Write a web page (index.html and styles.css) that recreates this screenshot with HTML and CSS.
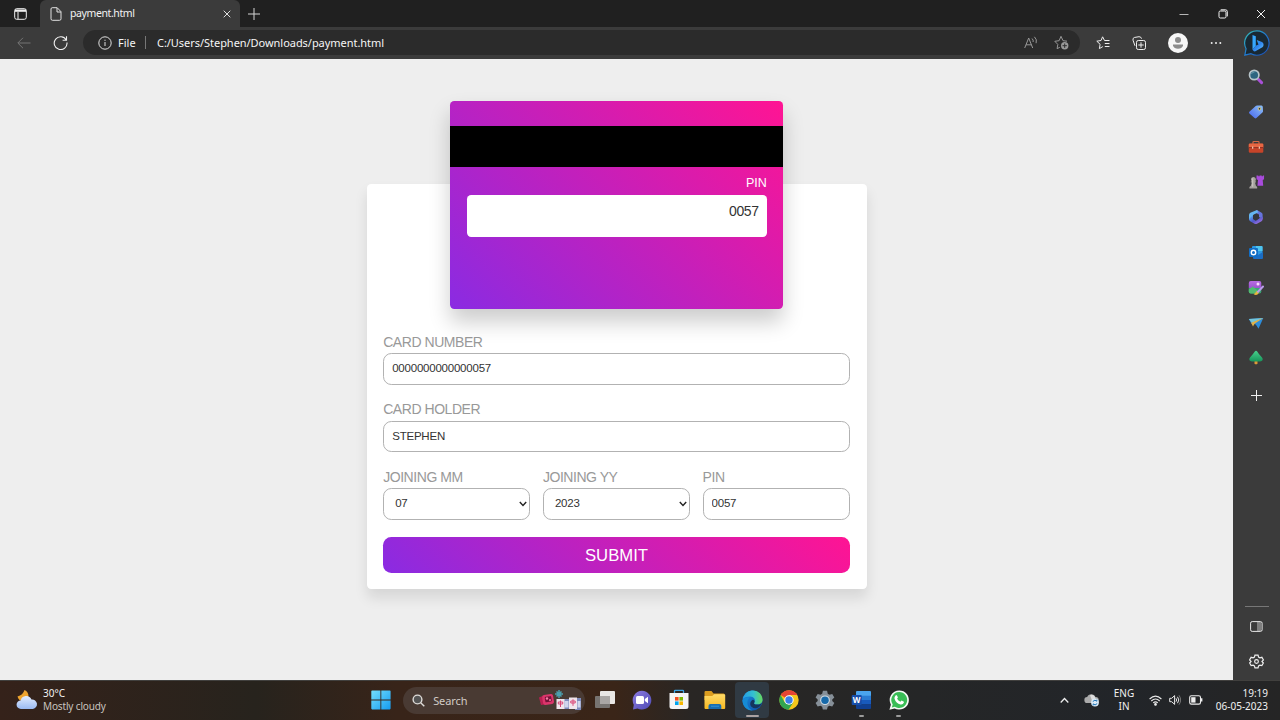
FILE: index.html
```html
<!DOCTYPE html>
<html lang="en">
<head>
<meta charset="utf-8">
<title>payment.html</title>
<link rel="stylesheet" href="styles.css">
</head>
<body>
<svg width="0" height="0" class="defs">
  <defs>
    <linearGradient id="bing" x1="0" y1="0" x2="1" y2="1"><stop offset="0" stop-color="#35b8f4"/><stop offset=".5" stop-color="#2e83ee"/><stop offset="1" stop-color="#66c9ff"/></linearGradient>
    <linearGradient id="ring" x1="0" y1="0" x2="1" y2="1"><stop offset="0" stop-color="#36c0b5"/><stop offset=".5" stop-color="#2079cf"/><stop offset="1" stop-color="#1a4bb5"/></linearGradient>
    <linearGradient id="tag" x1="0" y1="1" x2="1" y2="0"><stop offset="0" stop-color="#4765ee"/><stop offset="1" stop-color="#8ec2f5"/></linearGradient>
    <linearGradient id="office" x1="0" y1="0" x2="1" y2="1"><stop offset="0" stop-color="#5bbcf7"/><stop offset=".5" stop-color="#5157cc"/><stop offset="1" stop-color="#bd7ae7"/></linearGradient>
    <linearGradient id="photo" x1="0" y1="0" x2="0" y2="1"><stop offset="0" stop-color="#b86be4"/><stop offset=".55" stop-color="#9b55cf"/><stop offset=".6" stop-color="#39a777"/></linearGradient>
    <linearGradient id="tree" x1="0" y1="0" x2="0" y2="1"><stop offset="0" stop-color="#48cf8c"/><stop offset="1" stop-color="#16945a"/></linearGradient>
    <linearGradient id="win" x1="0" y1="0" x2="1" y2="1"><stop offset="0" stop-color="#74dffc"/><stop offset="1" stop-color="#159bf0"/></linearGradient>
    <linearGradient id="chat" x1="0" y1="0" x2="1" y2="1"><stop offset="0" stop-color="#8d7be0"/><stop offset="1" stop-color="#4e4bb5"/></linearGradient>
    <linearGradient id="edgetop" x1="0" y1="0" x2="1" y2="0"><stop offset="0" stop-color="#259de6"/><stop offset=".55" stop-color="#35c1ce"/><stop offset="1" stop-color="#67d95c"/></linearGradient>
    <linearGradient id="edgelow" x1="0" y1="0" x2="1" y2="1"><stop offset="0" stop-color="#1d91e2"/><stop offset="1" stop-color="#0c4ca5"/></linearGradient>
    <linearGradient id="folder" x1="0" y1="0" x2="0" y2="1"><stop offset="0" stop-color="#ffdb68"/><stop offset="1" stop-color="#f6b821"/></linearGradient>
    <linearGradient id="cloud" x1="0" y1="0" x2="0" y2="1"><stop offset="0" stop-color="#e2edff"/><stop offset="1" stop-color="#9bbaf2"/></linearGradient>
  </defs>
</svg>
<div class="desktop">
  <header class="titlebar">
    <div class="tab-actions"><svg width="13" height="12" viewBox="0 0 13 12"><rect x=".7" y=".7" width="11.6" height="10.6" rx="2" fill="none" stroke="#f0f0f0"/><path d="M1 1.5h11v2.3H1z" fill="#f0f0f0"/><path d="M4 4v7" stroke="#f0f0f0"/></svg></div>
    <div class="tab">
      <svg width="12" height="14" viewBox="0 0 12 14" fill="none" stroke="#e2e2e2"><path d="M2.2.7h5l3.8 4v7.1a1.5 1.5 0 0 1-1.5 1.5h-7A1.5 1.5 0 0 1 1 11.8V2A1.3 1.3 0 0 1 2.2.7z"/><path d="M7 1v4h4"/></svg>
      <span class="tab-title">payment.html</span>
      <svg width="8" height="8" viewBox="0 0 8 8" stroke="#e0e0e0"><path d="M.7.7l6.6 6.6M7.3.7L.7 7.3"/></svg>
    </div>
    <div class="new-tab"><svg width="12" height="12" viewBox="0 0 12 12" stroke="#d5d5d5"><path d="M6 0v12M0 6h12"/></svg></div>
    <div class="window-buttons">
      <svg width="10" height="10" viewBox="0 0 10 10" stroke="#ddd"><path d="M.5 5.5h9" stroke-width=".8"/></svg>
      <svg width="10" height="10" viewBox="0 0 10 10" fill="none" stroke="#f3f3f3"><rect x="1" y="2" width="7" height="7" rx="1.3"/><path d="M2.7.8h4.8a1.8 1.8 0 0 1 1.8 1.8v4.8"/></svg>
      <svg width="10" height="10" viewBox="0 0 10 10" stroke="#f3f3f3"><path d="M1 1l8 8M9 1L1 9"/></svg>
    </div>
  </header>

  <div class="browser">
    <div class="view">
      <nav class="toolbar">
        <div class="tool back"><svg width="14" height="12" viewBox="0 0 14 12" fill="none" stroke="#757575"><path d="M13.5 6H1M6 .8L.8 6 6 11.2"/></svg></div>
        <div class="tool reload"><svg width="15" height="15" viewBox="0 0 15 15" fill="none" stroke="#f0f0f0" stroke-width="1.1"><path d="M13.3 5.2A6.4 6.4 0 1 0 14 7.5M13.5 1.2v4H9.6"/></svg></div>
        <div class="address">
          <svg width="14" height="14" viewBox="0 0 14 14" fill="none" stroke="#e0e0e0"><circle cx="7" cy="7" r="6.2"/><path d="M7 6v4M7 3.7v1.2"/></svg>
          <span class="scheme">File</span><span class="divider"></span><span class="url">C:/Users/Stephen/Downloads/payment.html</span>
          <svg class="read" width="14" height="13" viewBox="0 0 14 13" fill="none" stroke="#989898"><path d="M.7 12L4.7 2l4 10M2 8.8h5.5M8 2.5q1.7 1.5 1.1 3.5M10.4.8q3 2.8 1.7 6.4"/></svg>
          <svg width="15" height="15" viewBox="0 0 15 15" fill="none" stroke="#969696"><path d="M5.8 12.3l-2.7 1.4.7-4.3L.8 6.3l4.3-.6L7 1.3l2 4.4 4 .5"/><circle cx="10.7" cy="10.7" r="3.7" fill="#999" stroke="none"/><path d="M10.7 8.5v4.4M8.5 10.7h4.4" stroke="#303030"/></svg>
        </div>
        <div class="tools-right">
          <svg width="14" height="14" viewBox="0 0 14 14" fill="none" stroke="#eee"><path d="M6.8 10.6l-3.4 2 .7-4.3L.8 5.2l4.2-.7L6.6.8l1.9 3.7h5M8.8 7.5h4.7M8.8 10.5h4.7"/></svg>
          <svg width="14" height="14" viewBox="0 0 14 14" fill="none" stroke="#eee"><rect x="4.5" y="4.5" width="9" height="9" rx="1.8"/><path d="M9 6.3v5.4M6.3 9h5.4M3 9.8L1 4.2Q.5 2.2 2.3 1.5L7 .7q2-.2 2.5 2"/></svg>
          <svg width="20" height="20" viewBox="0 0 20 20"><circle cx="10" cy="10" r="10" fill="#f7f7f7"/><circle cx="10" cy="7" r="3" fill="#8c8c8c"/><path d="M5 11.5h10v1.2q-1.2 3-5 3t-5-3z" fill="#8c8c8c"/></svg>
          <svg width="12" height="4" viewBox="0 0 12 4" fill="#eee"><circle cx="1.7" cy="2" r="1"/><circle cx="6" cy="2" r="1"/><circle cx="10.3" cy="2" r="1"/></svg>
        </div>
      </nav>
      <main class="page">
        <section class="card">
          <div class="stripe"></div>
          <div class="card-pin">PIN</div>
          <div class="pin-box">0057</div>
        </section>
        <form class="payment">
          <div class="field"><label for="number">CARD NUMBER</label><input id="number" value="0000000000000057"></div>
          <div class="field"><label for="holder">CARD HOLDER</label><input id="holder" value="STEPHEN"></div>
          <div class="field-row">
            <div class="field"><label>JOINING MM</label><div class="select">07<svg width="8" height="6" viewBox="0 0 8 6" fill="none" stroke="#222" stroke-width="1.4"><path d="M.8 1L4 4.5 7.2 1"/></svg></div></div>
            <div class="field"><label>JOINING YY</label><div class="select">2023<svg width="8" height="6" viewBox="0 0 8 6" fill="none" stroke="#222" stroke-width="1.4"><path d="M.8 1L4 4.5 7.2 1"/></svg></div></div>
            <div class="field"><label for="pin">PIN</label><input id="pin" value="0057"></div>
          </div>
          <button type="button" class="submit">SUBMIT</button>
        </form>
      </main>
    </div>

    <aside class="sidebar">
      <div class="side bing"><svg width="26" height="26" viewBox="0 0 26 26"><path d="M13 .8A12.2 12.2 0 1 1 7 23.7L.8 25.2l1.3-6.5A12.2 12.2 0 0 1 13 .8z" fill="#192934" stroke="url(#ring)" stroke-width="1.2"/><path d="M8.5 5l3.300 1.300v9.500l-3.300 4z" fill="#36a8ff"/><path d="M8.500 19.800l3.300-4 2.700-1.400-1.800-4.400 5.300 2q1.500.7 1.500 2.300v1q0 1.200-1.100 1.900l-6.600 3.900q-1.700 1-3.300-1.300z" fill="url(#bing)"/></svg></div>
      <div class="side"><svg width="16" height="16" viewBox="0 0 16 16"><path d="M10 10l3.600 3.600" stroke="#a950d8" stroke-width="3" stroke-linecap="round"/><circle cx="6.2" cy="6" r="4.7" fill="#2d6580" stroke="#b6c3c9" stroke-width="1.7"/><path d="M3.5 5Q4 3 6.5 3" stroke="#679cad" fill="none"/></svg></div>
      <div class="side"><svg width="16" height="16" viewBox="0 0 16 16"><path d="M9 1.500l4.500.1q1.200.1 1.300 1.300l.2 4.300q0 .7-.6 1.200l-6 5.600q-.9.800-1.800 0L1.400 9.600q-.9-.9 0-1.800l6.300-5.800q.5-.5 1.300-.5z" fill="url(#tag)"/><circle cx="11.500" cy="4.800" r="1.300" fill="#334" stroke="#dcd27e"/></svg></div>
      <div class="side"><svg width="16" height="16" viewBox="0 0 16 16"><path d="M5 5V3.200q0-.7.7-.7h4.600q.7 0 .7.7V5" fill="none" stroke="#d76745" stroke-width="1.2"/><rect x=".8" y="4.700" width="14.500" height="9" rx="1.200" fill="#c74429"/><path d="M.8 5.500q0-1 1-1h12.500q1 0 1 1v3H.8z" fill="#e86743"/><path d="M1 8.600h14" stroke="#913022"/><path d="M4 7.500h1.300v2.300H4zM10.700 7.500H12v2.300h-1.300z" fill="#edc1a8"/></svg></div>
      <div class="side"><svg width="17" height="16" viewBox="0 0 18 16"><path d="M9 1h2v1h1.200V1h2.300v1h1.200V1H17v4l-1.400 1 .5 6H10l.6-6L9 5z" fill="#a84bdc"/><path d="M5.800 2.800a2.500 2.500 0 0 1 1.600 4.500h1v1.200h-1l1 3.500 1.300 1.300V15H1.500v-1.700L3 12l1-3.500H3V7.300h1.100a2.500 2.500 0 0 1 1.700-4.500z" fill="#a5a19d"/><path d="M5 4v9" stroke="#d0ccc8"/></svg></div>
      <div class="side"><svg width="16" height="16" viewBox="0 0 16 16"><path d="M9 1l4.600 2.700q1 .6 1 1.800v4.700L11 8V5.500L7.500 3.700z" fill="#6674dc"/><path d="M9 1L2.300 3.800Q1 4.500 1 6v4.500L5 11V6l5.300-2.700z" fill="#65b5f0"/><path d="M1 10q0 1.500 1.200 2.200l4.300 2.500q1.300.7 2.500 0l4.500-2.500q1.200-.8 1.200-2.200V7.500L11 9.500l-3.300 2.200L5 10V6z" fill="url(#office)"/><path d="M5.300 6.200L8 4.800l3 1.500v3.200l-3 2-2.700-1.500z" fill="#35363b"/></svg></div>
      <div class="side"><svg width="16" height="16" viewBox="0 0 16 16"><rect x="4" y="1" width="10.500" height="11" rx="1" fill="#2c99e3"/><path d="M8 1h5.500q1 0 1 1v4H8z" fill="#4fc5ef"/><path d="M5 7l5 3 5-3v6q0 1-1 1H6q-1 0-1-1z" fill="#1b6dc4"/><rect x="1" y="3" width="9" height="9" rx="1" fill="#126ec6"/><circle cx="5.500" cy="7.500" r="2.200" fill="none" stroke="#fff" stroke-width="1.400"/></svg></div>
      <div class="side"><svg width="16" height="16" viewBox="0 0 16 16"><rect x=".8" y="1" width="12.500" height="12.500" rx="2" fill="url(#photo)"/><path d="M.8 9.500l4-3 5 4.200-3 2.800h-4q-2 0-2-2z" fill="#52bb72"/><circle cx="10" cy="4" r="1.500" fill="#f8dafa"/><path d="M5.500 14q2-.5 2.500-2.200 1.200-1.500 2.500 0 .8 1.500-1 2.700-2 1-4-.5z" fill="#e9ba3b"/><path d="M10 11.800l5-5.300" stroke="#b99bea" stroke-width="2" stroke-linecap="round"/></svg></div>
      <div class="side"><svg width="16" height="16" viewBox="0 0 16 16"><path d="M.8 4L15.300 3 10.500 13.800 7.800 9.600 3.300 8.500z" fill="#2d8ddb"/><path d="M.8 4L15.300 3 4 8z" fill="#73c5db"/><path d="M3 7.800L15.300 3 6.500 8.800 5 11.500z" fill="#e2b248"/></svg></div>
      <div class="side"><svg width="16" height="16" viewBox="0 0 16 16"><path d="M6.500 10h3v3.700q-1.500 1.300-3 0z" fill="#dd9a37"/><path d="M8 .8q.7 0 1.200.8 1.700 3 4.800 5.800 1.400 1.500.3 3-1.100 1.200-6.300 1.200t-6.300-1.200q-1-1.500.3-3Q5.100 4.400 6.800 1.600 7.300.8 8 .8z" fill="url(#tree)"/></svg></div>
      <div class="side add"><svg width="11" height="11" viewBox="0 0 11 11" stroke="#f0f0f0"><path d="M5.500 0v11M0 5.500h11"/></svg></div>
      <div class="side-rule"></div>
      <div class="side"><svg width="13" height="11" viewBox="0 0 13 11" fill="none" stroke="#e7e7e7"><rect x=".6" y=".6" width="11.500" height="9.800" rx="1.600"/><path d="M8 1v9M10 1v9" stroke-width=".8"/></svg></div>
      <div class="side"><svg width="15" height="15" viewBox="0 0 24 24" fill="none" stroke="#ededed" stroke-width="1.900"><circle cx="12" cy="12" r="3"/><path d="M9.500 1.800h5l.8 3.200 2.100 1.200 3.200-.9 2.400 4.200-2.300 2.400 2.300 2.500-2.400 4.200-3.200-.8-2.100 1.200-.8 3.200h-5L8.700 19l-2.100-1.200-3.200.8L1 14.400l2.300-2.500L1 9.500l2.400-4.200 3.200.9L8.700 5z"/></svg></div>
    </aside>
  </div>

  <footer class="taskbar">
    <div class="weather">
      <svg width="22" height="22" viewBox="0 0 22 22"><path d="M8.500 1q-1.500 5-7 6.500 1 4 5 4.500l6-4.500Q12.500 2.500 8.500 1z" fill="#eda42f"/><path d="M5 20a4.300 4.300 0 0 1-.3-8.600A5.700 5.700 0 0 1 15.500 10.500a4.700 4.700 0 0 1 1.400 9.500z" fill="url(#cloud)"/></svg>
      <div><div class="temp">30°C</div><div class="sky">Mostly cloudy</div></div>
    </div>
    <div class="apps">
      <div class="app"><svg width="20" height="20" viewBox="0 0 20 20" fill="url(#win)"><path d="M.3 1.300q0-.8.8-.8h8.300v9H.3zM10.300.5h8.500q.8 0 .8.8v8.200h-9.300zM.3 10.400h9.100v9H1.100q-.8 0-.8-.8zM10.300 10.400h9.300v8.200q0 .8-.8.8h-8.500z"/></svg></div>
      <div class="search">
        <svg width="13" height="13" viewBox="0 0 13 13" fill="#555" stroke="#dedbd8" stroke-width="1.400"><circle cx="5.500" cy="5.500" r="4.400"/><path d="M8.700 8.700l3.600 3.600"/></svg>
        <span>Search</span>
        <svg class="tiles" width="44" height="22" viewBox="0 0 44 22"><path d="M1 8.500l3.500-1.500 1.500 8.500-3 .5z" fill="#b91e51"/><rect x="4.500" y="5.500" width="11" height="10" rx="2" transform="rotate(-9 10 10)" fill="#dc356b"/><rect x="7" y="7.500" width="6.500" height="5.500" rx="1" transform="rotate(-9 10 10)" fill="#741238"/><circle cx="9" cy="9.500" r="1.200" fill="#f97da4"/><circle cx="12" cy="11" r="1" fill="#f97da4"/><path d="M21 1v8M17 5h8M18.500 2.500l5 5M23.500 2.500l-5 5" stroke="#4c9fae" stroke-width="1.500"/><path d="M26 10h7v10h-7zM37 9h6v12h-6z" fill="#7e8bbb"/><path d="M18.500 10h8v10h-8zM31 8.500h8V20h-8z" fill="#f0e5ec"/><path d="M26.500 12h4v6.500h-4zM39.500 12h3v6.500h-3z" fill="#d0d5ec"/><path d="M22.500 11.500V18M20.300 13h4.400v2h-4.400zM35 10.300v6.500M32.800 12h4.400v2h-4.400z" fill="none" stroke="#d94978"/></svg>
      </div>
      <div class="app"><svg width="22" height="22" viewBox="0 0 22 22"><rect x="6" y="2" width="15" height="13" rx="1" fill="#e9e7e5"/><rect x="1" y="7" width="15" height="12" rx="1" fill="#777471"/><path d="M6 7h10v8H6z" fill="#aaa7a5"/></svg></div>
      <div class="app"><svg width="20" height="20" viewBox="0 0 20 20"><path d="M10 .8a9.400 9.400 0 1 1-4.500 17.700L1 19.500l.8-4.800A9.400 9.400 0 0 1 10 .8z" fill="url(#chat)"/><rect x="4" y="6" width="8" height="8" rx="1.500" fill="#fff"/><path d="M12.800 9l3.200-2.200v6.400L12.800 11z" fill="#fff"/></svg></div>
      <div class="app"><svg width="20" height="22" viewBox="0 0 20 22"><path d="M5.500 5V2q0-.7.7-.7h7.600q.7 0 .7.7v3" fill="none" stroke="#3aa3e4" stroke-width="1.300"/><path d="M.5 4h19v13.500q0 2.500-2.500 2.500H3Q.5 20 .5 17.500z" fill="#f4f4f5"/><path d="M6 8h3.600v3.600H6z" fill="#f05023"/><path d="M10.400 8H14v3.600h-3.600z" fill="#7eb900"/><path d="M6 12.400h3.600V16H6z" fill="#00a4ef"/><path d="M10.400 12.400H14V16h-3.600z" fill="#f9b700"/></svg></div>
      <div class="app"><svg width="22" height="20" viewBox="0 0 22 20"><path d="M.5 2.200Q.5 1 1.700 1h5.800l2 2.500h10q1 0 1 1V10H.5z" fill="#dc9d1f"/><path d="M.5 6h7.700l2-1.800h10.200q.8 0 .8.8v13q0 1-1 1H1.500q-1 0-1-1z" fill="url(#folder)"/><path d="M4.500 19v-3q0-2 2-2h8.800q2 0 2 2v3z" fill="#176cb1"/><path d="M7 16.200h8" stroke="#3394d5"/></svg></div>
      <div class="app active"><svg width="21" height="21" viewBox="0 0 24 24"><circle cx="12" cy="12" r="11.500" fill="url(#edgelow)"/><path d="M1 10C3 3 7.500.5 12.500.5 19 .5 23.500 5.500 23.500 11c0 3.500-3 5.700-6.300 5.700-3 0-4-1.300-3.300-2.200 2.300-3.500-.4-7-4.700-7C5.700 7.500 3 8.500 1 10z" fill="url(#edgetop)"/><path d="M14 14.500c-.7 1 .3 2.200 3.200 2.200 2.500 0 4.300-.9 5.500-2.200-2 6-8 8-11.500 5-3-2.500-2-7 1.300-8.500q2.800 1 1.500 3.500z" fill="#15355d"/><path d="M9 8.300C4.500 12 5 20 12 23.500 5 23.500.5 18 .6 12 2 9 5 7.800 9 8.300z" fill="#168bd5"/></svg><i></i></div>
      <div class="app"><svg width="20" height="20" viewBox="0 0 20 20"><circle cx="10" cy="10" r="9.700" fill="#f5c71b"/><path d="M10 10L1.600 5.100A9.700 9.700 0 0 1 18.400 5.100H10z" fill="#e64434"/><path d="M1.600 5.100A9.700 9.700 0 0 0 9.500 19.700L14.200 12.500 10 10 5.800 12.500z" fill="#32a551"/><circle cx="10" cy="10" r="4.700" fill="#fff"/><circle cx="10" cy="10" r="3.700" fill="#3b7ee9"/></svg></div>
      <div class="app"><svg width="20" height="20" viewBox="0 0 24 24"><path d="M9.500 1h5l.8 3.500 2 1.200 3.400-1 2.500 4.200-2.500 2.500v1.800l2.500 2.400-2.500 4.300-3.500-1-2 1.200-.8 3.400h-5l-.8-3.400-2-1.200-3.400 1-2.500-4.300 2.500-2.400v-1.800L.7 8.900l2.500-4.200 3.400 1 2-1.200z" fill="#868f98"/><circle cx="12" cy="12.300" r="5.800" fill="#d1dce4"/><circle cx="12" cy="12.300" r="4.500" fill="#1769a9"/></svg></div>
      <div class="app running"><svg width="21" height="20" viewBox="0 0 21 20"><path d="M5 2q0-1 1-1h13q1 0 1 1v4H5z" fill="#4ba5ee"/><path d="M5 5.700h15v4.500H5z" fill="#2b7cd3"/><path d="M5 10h15v4.500H5z" fill="#185abd"/><path d="M5 14.300h15V18q0 1-1 1H6q-1 0-1-1z" fill="#103f91"/><rect x=".7" y="5" width="10" height="10" rx="1" fill="#174eaa"/><text x="5.700" y="12.700" text-anchor="middle" class="word-mark">W</text></svg><i></i></div>
      <div class="app running"><svg width="20" height="20" viewBox="0 0 20 20"><path d="M10.200.4a9.600 9.600 0 1 1-4.600 18L.4 19.700l1.500-5A9.600 9.600 0 0 1 10.200.4z" fill="#f4faf5"/><path d="M10.200 2a8 8 0 1 1-4.400 14.700l-3 .8.900-3A8 8 0 0 1 10.200 2z" fill="#39bd56"/><path d="M6.800 5.200h1.100l1 2.300-.8 1.200q1 2.100 3.400 3.100l1-1.200 2.400 1.200v.8q-1 2.400-3.400 1.900-4.600-1.300-6-5.800-.4-2 1.300-3.500z" fill="#fff"/></svg><i></i></div>
    </div>
    <div class="tray">
      <svg width="9" height="7" viewBox="0 0 9 7" fill="none" stroke="#eee" stroke-width="1.300"><path d="M.7 5.500l3.800-4 3.800 4"/></svg>
      <svg class="onedrive" width="16" height="14" viewBox="0 0 16 14"><path d="M3.500 10a3 3 0 0 1-.3-6A4.400 4.400 0 0 1 11.400 4 3 3 0 0 1 12 10z" fill="#aaa"/><path d="M6 2.200Q9 1 11 4l1 6H9z" fill="#ddd"/><circle cx="11" cy="9.500" r="3.900" fill="#dbeaf6"/><path d="M8.800 8.500q2.200-2.400 4-.3v-1.500M13.200 10.600q-2.200 2.400-4 .3v1.500" fill="none" stroke="#1c73b6"/></svg>
      <div class="lang">ENG<br>IN</div>
      <svg class="wifi" width="13" height="11" viewBox="0 0 13 11" fill="none" stroke="#e8e8e8" stroke-width="1.100"><path d="M.6 4Q6.500-1.700 12.400 4M2.300 6q4.200-4 8.400 0M4.200 7.900q2.300-2 4.600 0"/><circle cx="6.500" cy="9.400" r=".8" fill="#eee"/></svg>
      <svg class="volume" width="12" height="12" viewBox="0 0 12 12" fill="none" stroke="#e8e8e8"><path d="M.7 4.300h2L5.600 1.600v8.800L2.700 7.700h-2zM7 4.300q1.300 1.700 0 3.400M8.500 2.800q2.600 3.200 0 6.400"/><path d="M10 1.300q3.300 4.700 0 9.400" stroke="#777"/></svg>
      <svg class="battery" width="14" height="10" viewBox="0 0 14 10"><rect x=".7" y=".7" width="10.800" height="8.400" rx="1.700" fill="none" stroke="#eee" stroke-width="1.100"/><path d="M2.200 2.200h4.300v5.400H2.200z" fill="#eee"/><path d="M12.700 3.300v3.200" stroke="#eee" stroke-width="1.400"/></svg>
      <div class="clock">19:19<br>06-05-2023</div>
    </div>
  </footer>
</div>
</body>
</html>
```

FILE: styles.css
```css
* { box-sizing: border-box; }
body { margin: 0; font-family: "Noto Sans", "Open Sans", sans-serif; }
svg { display: block; flex: none; }
.defs { position: absolute; }
.desktop { width: 1280px; height: 720px; overflow: hidden; display: flex; flex-direction: column; background: #3b3b3b; }

.titlebar { height: 27px; flex: none; display: flex; background: #202020; color: #f2f2f2; }
.tab-actions { width: 40px; display: flex; align-items: center; justify-content: center; }
.tab { width: 200px; background: #3b3b3b; border-radius: 6px 6px 0 0; display: flex; align-items: center; padding: 0 9px 0 10px; }
.tab-title { flex: 1; margin-left: 8px; font-size: 10px; line-height: 14px; letter-spacing: -.4px; padding-bottom: 1px; }
.tab-title { font-size: 10.500px; }
.new-tab { width: 28px; display: flex; align-items: center; justify-content: center; }
.window-buttons { margin-left: auto; display: flex; align-items: center; gap: 28.300px; padding-right: 14px; }

.browser { height: 653px; flex: none; display: flex; }
.view { width: 1233px; display: flex; flex-direction: column; }
.toolbar { height: 32px; flex: none; display: flex; align-items: center; background: #3b3b3b; color: #f5f5f5; padding-bottom: 1px; }
.tool { display: flex; justify-content: center; }
.back { width: 47px; }
.reload { width: 26px; }
.address { width: 997px; height: 25px; margin-left: 10px; border-radius: 13px; background: #2b2b2b; display: flex; align-items: center; padding: 0 11px 0 15px; font-size: 11px; }
.scheme { margin-left: 6px; width: 27px; padding-bottom: 1px; }
.divider { width: 1px; height: 13px; background: #777; }
.url { margin-left: 11px; flex: 1; letter-spacing: -.04px; padding-bottom: 1px; }
.read { margin-right: 16px; }
.tools-right { display: flex; align-items: center; padding-left: 16px; gap: 22px; }

.page { flex: 1; background: #eee; padding-top: 42px; display: flex; flex-direction: column; align-items: center; font-family: "Liberation Sans", Arial, sans-serif; }
.card { position: relative; width: 333.300px; height: 208.300px; flex: none; border-radius: 4.200px; background: linear-gradient(45deg, blueviolet, deeppink); box-shadow: 0 12.500px 20.800px rgba(0, 0, 0, .2); padding-top: 25px; margin-bottom: -125.300px; z-index: 1; }
.stripe { height: 41.400px; background: #000; }
.card-pin { color: #fff; text-align: right; font-size: 12.500px; line-height: 15px; margin: 9px 16.300px 4px; }
.pin-box { margin: 0 16.300px 0 16.700px; height: 41.700px; border-radius: 4.200px; background: #fff; color: #333; font-size: 14px; letter-spacing: -.4px; line-height: 15px; padding: 8.300px; text-align: right; }
.payment { width: 500px; height: 405.300px; border-radius: 4.200px; background: #fff; box-shadow: 0 8.300px 12.500px rgba(0, 0, 0, .1); padding: 149.500px 16.700px 0; }
.field { height: 67.500px; }
.field label { display: block; height: 19.500px; line-height: 16px; font-size: 14px; letter-spacing: -.45px; color: #999; }
.field input, .select { width: 100%; height: 31.700px; border: 1px solid #b2b2b2; border-radius: 8.300px; background: #fff; color: #333; padding: 0 8px 1px; font: 11.500px/29px "Liberation Sans", Arial, sans-serif; letter-spacing: -.22px; outline: none; display: block; }
.select { padding: 0 2px 0 11px; display: flex; align-items: center; justify-content: space-between; }
.field-row { display: grid; grid-template-columns: repeat(3, 1fr); gap: 12.500px; }
.submit { display: block; width: 100%; height: 36px; margin-top: 1px; padding: 1px 0 0; border: 0; border-radius: 8.300px; background: linear-gradient(45deg, blueviolet, deeppink); color: #fff; font: 16.700px "Liberation Sans", Arial, sans-serif; }

.sidebar { width: 47px; background: #3b3b3b; display: flex; flex-direction: column; padding-bottom: 1px; }
.side { height: 35.100px; display: flex; align-items: center; justify-content: center; padding-right: 1px; }
.bing { height: 32.500px; padding-right: 0; }
.add { margin-top: 3px; }
.side-rule { height: 1px; width: 24px; margin: auto auto 2px; background: #777; }

.taskbar { height: 40px; flex: none; display: flex; align-items: center; color: #f1f1f1; background: linear-gradient(90deg, #35221a, #27231d 20%, #382419 31%, #3a2518 48%, #292624 54%, #252627 72%, #222529 88%, #252525); border-top: 1px solid #41403e; padding-bottom: 1px; }
.weather { width: 362.500px; display: flex; align-items: center; padding-left: 16px; font-size: 10px; line-height: 13.500px; gap: 5px; }
.sky { color: #c9c3bf; letter-spacing: -.15px; }
.apps { display: flex; align-items: center; }
.app { width: 36.650px; height: 36px; position: relative; display: flex; align-items: center; justify-content: center; }
.active { width: 34px; margin: 0 1.300px; border-radius: 4px; background: #303a43; }
.app i { position: absolute; bottom: 1px; left: 50%; width: 5px; height: 2px; margin-left: -2.500px; border-radius: 1px; background: #9b9b9b; }
.active i { width: 13px; margin-left: -6.500px; background: #aaa1a1; }
.search { width: 182px; height: 27px; margin: 0 2px 0 4px; border-radius: 14px; background: #493a33; display: flex; align-items: center; padding: 0 3px 0 9px; font-size: 11px; letter-spacing: -.1px; color: #d1cac5; gap: 8px; }
.tiles { margin-left: auto; }
.word-mark { font: bold 8px "Open Sans", sans-serif; fill: #fff; }
.tray { margin-left: auto; display: flex; align-items: center; padding-right: 12px; font-size: 10px; line-height: 13.500px; }
.onedrive { margin-left: 15px; }
.lang { width: 32px; margin-left: 8px; text-align: center; }
.wifi { margin-left: 9px; }
.volume { margin-left: 7px; }
.battery { margin-left: 8px; }
.clock { width: 65px; text-align: right; }
```
